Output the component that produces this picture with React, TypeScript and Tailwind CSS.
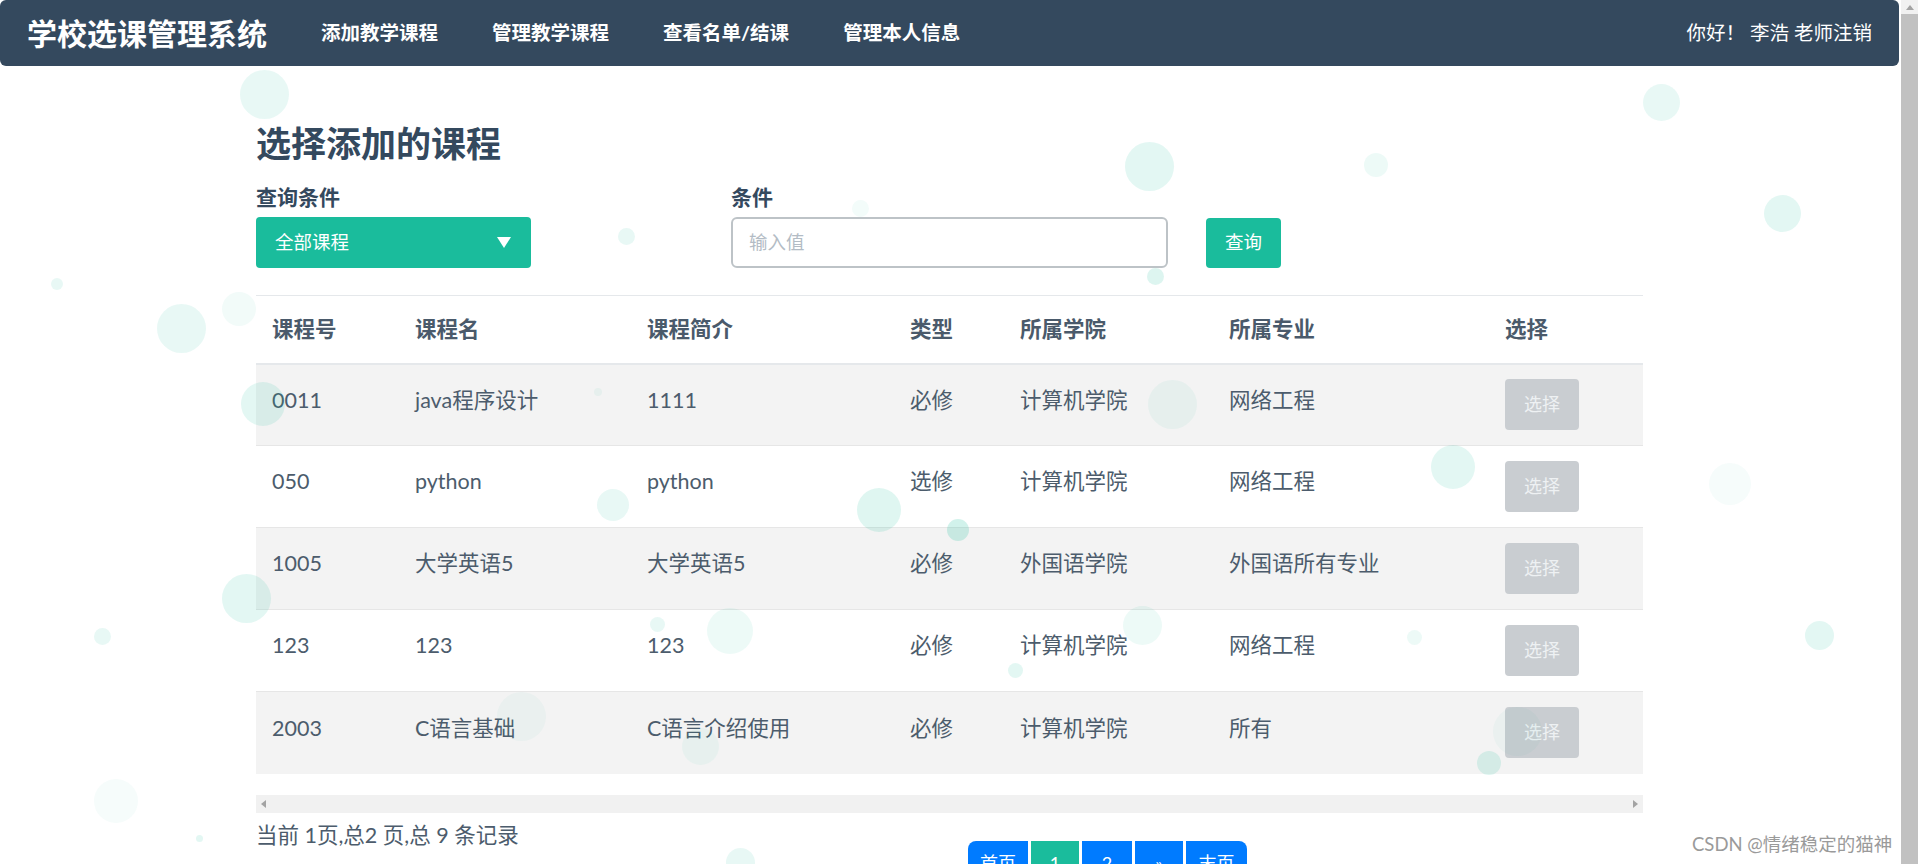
import React from "react";

const courses = [
  { id: "0011", name: "java程序设计", intro: "1111", type: "必修", college: "计算机学院", major: "网络工程" },
  { id: "050", name: "python", intro: "python", type: "选修", college: "计算机学院", major: "网络工程" },
  { id: "1005", name: "大学英语5", intro: "大学英语5", type: "必修", college: "外国语学院", major: "外国语所有专业" },
  { id: "123", name: "123", intro: "123", type: "必修", college: "计算机学院", major: "网络工程" },
  { id: "2003", name: "C语言基础", intro: "C语言介绍使用", type: "必修", college: "计算机学院", major: "所有" },
];

// floating background bubbles: [x, y, diameter, opacity]
const bubbles: [number, number, number, number][] = [
  [264, 94, 49, 0.1],
  [1149, 166, 49, 0.12],
  [1661, 102, 37, 0.1],
  [1376, 165, 24, 0.08],
  [1782, 213, 37, 0.12],
  [626, 236, 17, 0.1],
  [860, 208, 17, 0.05],
  [181, 328, 49, 0.1],
  [239, 309, 34, 0.06],
  [57, 284, 12, 0.1],
  [1155, 276, 17, 0.15],
  [263, 404, 44, 0.12],
  [1172, 404, 49, 0.06],
  [1453, 467, 44, 0.12],
  [1730, 484, 42, 0.04],
  [879, 510, 44, 0.14],
  [613, 505, 32, 0.1],
  [958, 530, 22, 0.2],
  [246, 598, 49, 0.12],
  [102, 636, 17, 0.1],
  [657, 624, 15, 0.1],
  [730, 631, 46, 0.08],
  [1142, 625, 39, 0.08],
  [1015, 670, 15, 0.12],
  [1414, 637, 15, 0.08],
  [1819, 635, 29, 0.12],
  [521, 716, 49, 0.04],
  [700, 746, 37, 0.05],
  [1489, 763, 24, 0.14],
  [116, 801, 44, 0.04],
  [199, 838, 7, 0.12],
  [740, 862, 29, 0.1],
  [1517, 731, 49, 0.04],
  [598, 392, 8, 0.06],
];

export default function App() {
  return (
    <div className="relative flex h-[864px] w-[1918px] overflow-hidden bg-white font-[Lato,'Noto_Sans_CJK_SC',sans-serif] text-[#34495e]">
      <div className="flex w-[1901px] shrink-0 flex-col">
        {/* navbar */}
        <div className="flex h-[66px] w-[1899px] shrink-0 items-center rounded-md bg-[#34495e] pl-[27px] pr-[27px] text-white">
          <span className="text-[30px] font-bold leading-none">学校选课管理系统</span>
          <div className="ml-[27px] flex">
            {["添加教学课程", "管理教学课程", "查看名单/结课", "管理本人信息"].map((t) => (
              <span key={t} className="px-[27px] text-[19.5px] font-bold">
                {t}
              </span>
            ))}
          </div>
          <div className="ml-auto text-[19.5px]">你好！ 李浩 老师注销</div>
        </div>

        <div className="ml-[256px] w-[1387px] shrink-0">
          <h2 className="mt-[55px] text-[35px] font-bold leading-[44px]">选择添加的课程</h2>

          <div className="mt-[18px] flex">
            <div className="w-[475px]">
              <div className="text-[21px] font-bold leading-[28px]">查询条件</div>
              <div className="mt-[6px] flex h-[51px] w-[275px] items-center justify-between rounded-[4px] bg-[#1abc9c] pl-[19px] pr-[20px] text-[18.5px] text-white">
                <span>全部课程</span>
                <svg width="14" height="11" viewBox="0 0 14 11">
                  <path d="M0 0 L14 0 L7 11 Z" fill="white" />
                </svg>
              </div>
            </div>
            <div className="w-[437px]">
              <div className="text-[21px] font-bold leading-[28px]">条件</div>
              <div className="mt-[6px] flex h-[51px] items-center rounded-[6px] border-2 border-[#bdc3c7] pl-[16px] text-[18.5px] text-[#b3bcc5]">
                输入值
              </div>
            </div>
            <div className="ml-[38px] flex h-[50px] w-[75px] items-center justify-center self-end rounded-[4px] bg-[#1abc9c] text-[18.5px] text-white">
              查询
            </div>
          </div>

          <table className="mt-[27px] w-full table-fixed border-collapse border-t border-[#e5e8eb]">
            <colgroup>
              <col className="w-[143px]" />
              <col className="w-[232px]" />
              <col className="w-[263px]" />
              <col className="w-[110px]" />
              <col className="w-[209px]" />
              <col className="w-[276px]" />
              <col className="w-[154px]" />
            </colgroup>
            <thead>
              <tr className="h-[68px] border-b-2 border-[#e5e8eb]">
                {["课程号", "课程名", "课程简介", "类型", "所属学院", "所属专业", "选择"].map((h) => (
                  <th key={h} className="pl-[16px] text-left align-middle text-[21.5px] font-bold text-[#4a5a6b]">
                    {h}
                  </th>
                ))}
              </tr>
            </thead>
            <tbody>
              {courses.map((c, i) => (
                <tr
                  key={c.id}
                  className={`h-[82px] border-t border-[#e6e6e6] ${i % 2 === 0 ? "bg-[#f3f3f3]" : "bg-white"}`}
                >
                  {[c.id, c.name, c.intro, c.type, c.college, c.major].map((v, j) => (
                    <td key={j} className="pl-[16px] pb-[10px] align-middle text-[21.5px] text-[#4c5c6c]">
                      {v}
                    </td>
                  ))}
                  <td className="pl-[16px] align-middle">
                    <div className="flex h-[51px] w-[74px] items-center justify-center rounded-[4px] bg-[#c9cdd1] text-[18px] text-[#eef1f3]">
                      选择
                    </div>
                  </td>
                </tr>
              ))}
            </tbody>
          </table>

          {/* horizontal scrollbar */}
          <div className="mt-[21px] flex h-[18px] items-center justify-between bg-[#f1f1f1] px-[5px]">
            <svg width="5" height="8" viewBox="0 0 5 8">
              <path d="M5 0 L0 4 L5 8 Z" fill="#a3a3a3" />
            </svg>
            <svg width="5" height="8" viewBox="0 0 5 8">
              <path d="M0 0 L5 4 L0 8 Z" fill="#a3a3a3" />
            </svg>
          </div>

          <div className="mt-[10px] flex items-start">
            <div className="w-[712px] text-[21.5px] leading-[24px] text-[#4c5c6c]">当前 1页,总2 页,总 9 条记录</div>
            <div className="mt-[18px] flex gap-[3px] text-[18px] text-white">
              <div className="flex h-[46px] w-[60px] items-center justify-center rounded-l-[8px] bg-[#007bff]">首页</div>
              <div className="flex h-[46px] w-[48px] items-center justify-center bg-[#1abc9c]">1</div>
              <div className="flex h-[46px] w-[50px] items-center justify-center bg-[#007bff]">2</div>
              <div className="flex h-[46px] w-[48px] items-center justify-center bg-[#007bff]">»</div>
              <div className="flex h-[46px] w-[61px] items-center justify-center rounded-r-[8px] bg-[#007bff]">末页</div>
            </div>
          </div>
        </div>
      </div>

      {/* page scrollbar */}
      <div className="flex w-[17px] shrink-0 flex-col bg-[#f1f1f1]">
        <div className="flex h-[14px] items-center justify-center">
          <svg width="8" height="5" viewBox="0 0 8 5">
            <path d="M0 5 L4 0 L8 5 Z" fill="#a3a3a3" />
          </svg>
        </div>
        <div className="flex-1 bg-[#c1c1c1]" />
      </div>

      {/* decorative bubbles */}
      {bubbles.map(([x, y, d, o], i) => (
        <div
          key={i}
          className="pointer-events-none absolute rounded-full bg-[#1abc9c]"
          style={{ left: x - d / 2, top: y - d / 2, width: d, height: d, opacity: o }}
        />
      ))}

      <div className="pointer-events-none absolute left-[1692px] top-[830px] text-[18.5px] leading-[28px] text-[#9a9a9a]">
        CSDN @情绪稳定的猫神
      </div>
    </div>
  );
}
